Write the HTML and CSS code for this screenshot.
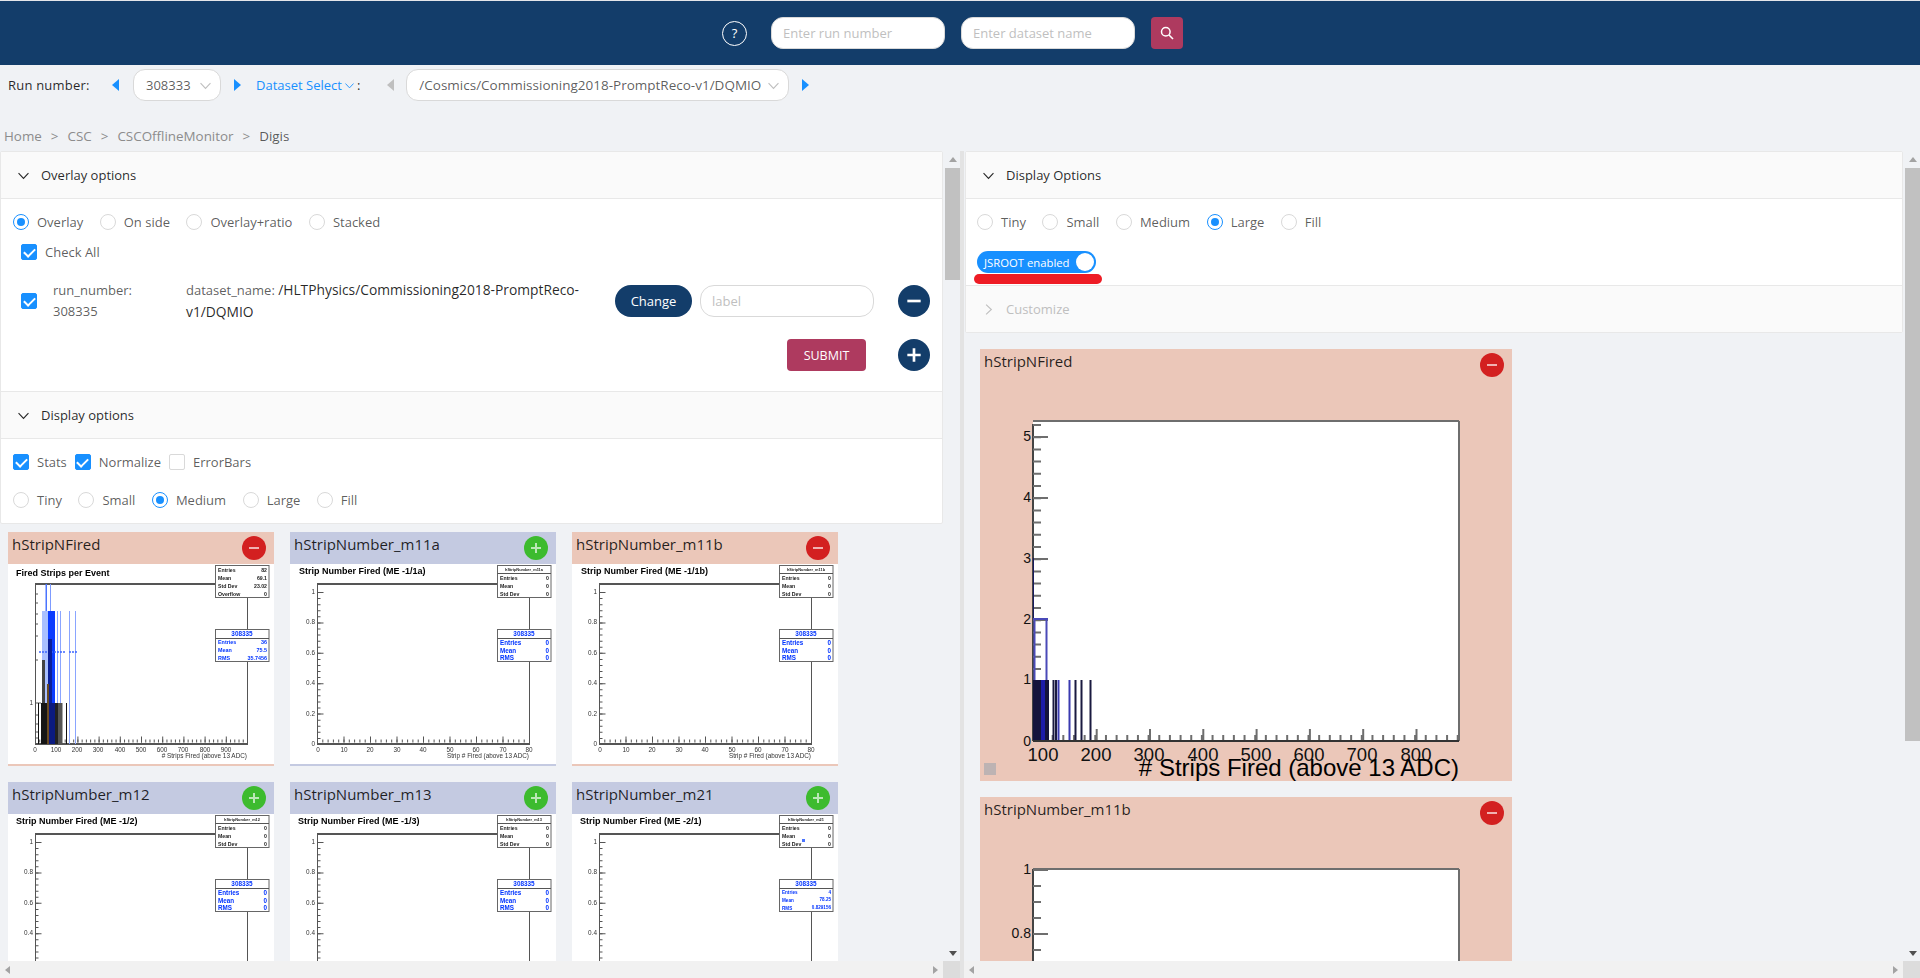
FILE: index.html
```html
<!DOCTYPE html>
<html lang="en">
<head>
    <meta charset="UTF-8">
    <meta name="viewport" content="width=device-width, initial-scale=1.0">
    <title>DQM GUI</title>
    <link rel="stylesheet" href="styles.css">
</head>
<body>
    <!-- shared icons and plot lines -->
    <svg class="defs" aria-hidden="true">
        <symbol id="chev-down" viewBox="0 0 10 10"><path d="M0.5 2.8 5 7.6 9.5 2.8" fill="none" stroke="currentColor" stroke-width="1"/></symbol>
        <symbol id="chev-right" viewBox="0 0 10 10"><path d="M2.8 0.5 7.6 5 2.8 9.5" fill="none" stroke="currentColor" stroke-width="1"/></symbol>
        <symbol id="minus" viewBox="0 0 24 24"><path d="M7 12H17" stroke="currentColor" stroke-width="2" fill="none"/></symbol>
        <symbol id="plus" viewBox="0 0 24 24"><path d="M7 12H17M12 7V17" stroke="currentColor" stroke-width="2" fill="none"/></symbol>

        <symbol id="frame" viewBox="0 0 266 200">
            <rect width="266" height="200" fill="#fff"/>
            <path d="M27.5 180V20" class="ax-thin"/>
            <path d="M239.5 20V180" class="ax-thin"/>
            <path d="M27 20H240" class="ax-thick"/>
            <path d="M27 180H240" class="ax-thick"/>
        </symbol>

        <symbol id="run-box" viewBox="0 0 266 200">
            <rect x="207.5" y="65.5" width="53.5" height="32" class="box"/>
            <path d="M207.5 74.5H261" class="ax-thin"/>
        </symbol>

        <symbol id="strip-axes" viewBox="0 0 266 200">
            <use href="#frame" width="266" height="200"/>
            <path d="M29 28V180" class="tick-y-minor"/>
            <path d="M30.5 28V180" class="tick-y-major"/>
            <line x1="27" y1="177" x2="240" y2="177" class="tick-x-minor"/>
            <line x1="27" y1="175.5" x2="240" y2="175.5" class="tick-x-major"/>
            <rect x="207.5" y="1.5" width="53.5" height="32" class="box"/>
            <path d="M207.5 9.5H261" class="ax-thin"/>
            <use href="#run-box" width="266" height="200"/>
        </symbol>

        <symbol id="big-axes" viewBox="0 0 532 400">
            <rect x="53" y="40" width="426" height="320" fill="#fff"/>
            <line x1="53" y1="43" x2="53" y2="360" class="big-y-line"/>
            <line x1="57" y1="43" x2="57" y2="360" class="big-y-minor"/>
            <line x1="60.5" y1="55" x2="60.5" y2="360" class="big-y-major"/>
        </symbol>
    </svg>

    <header class="topbar">
        <span class="help">?</span>
        <input class="top-input" type="text" placeholder="Enter run number">
        <input class="top-input" type="text" placeholder="Enter dataset name">
        <button class="search-btn" aria-label="search">
            <svg width="14" height="14" viewBox="0 0 14 14"><circle cx="5.8" cy="5.8" r="4.3" fill="none" stroke="#fff" stroke-width="1.5"/><path d="M9 9 13 13" stroke="#fff" stroke-width="1.6"/></svg>
        </button>
    </header>

    <div class="select-row">
        <span class="run-label">Run number:</span>
        <span class="caret caret-left first"></span>
        <div class="fake-select run-select">308333<svg class="sel-chev"><use href="#chev-down"/></svg></div>
        <span class="caret caret-right"></span>
        <a class="dataset-link">Dataset Select<svg class="link-chev"><use href="#chev-down"/></svg></a><span class="colon">:</span>
        <span class="caret caret-left off"></span>
        <div class="fake-select dataset-select">/Cosmics/Commissioning2018-PromptReco-v1/DQMIO<svg class="sel-chev"><use href="#chev-down"/></svg></div>
        <span class="caret caret-right"></span>
    </div>

    <nav class="crumbs">
        <span>Home</span><i>&gt;</i><span>CSC</span><i>&gt;</i><span>CSCOfflineMonitor</span><i>&gt;</i><span class="last">Digis</span>
    </nav>

    <main class="panes">
        <section class="pane">
            <div class="scroll">
                <div class="panel">
                    <div class="panel-head"><svg class="head-chev"><use href="#chev-down"/></svg>Overlay options</div>
                    <div class="panel-body overlay-body">
                        <div class="choice-row">
                            <label class="choice"><span class="radio on"></span>Overlay</label>
                            <label class="choice"><span class="radio"></span>On side</label>
                            <label class="choice"><span class="radio"></span>Overlay+ratio</label>
                            <label class="choice"><span class="radio"></span>Stacked</label>
                        </div>
                        <label class="choice check-all"><span class="check on"></span>Check All</label>
                        <div class="overlay-row">
                            <span class="check on"></span>
                            <div class="run-col">run_number:<br>308335</div>
                            <div class="ds-col">dataset_name: <b>/HLTPhysics/Commissioning2018-PromptReco-v1/DQMIO</b></div>
                            <button class="change-btn">Change</button>
                            <input class="label-input" type="text" placeholder="label">
                            <button class="circle-btn"><svg width="32" height="32"><use href="#minus"/></svg></button>
                        </div>
                        <div class="submit-row">
                            <button class="submit-btn">SUBMIT</button>
                            <button class="circle-btn"><svg width="32" height="32"><use href="#plus"/></svg></button>
                        </div>
                    </div>
                    <div class="panel-head"><svg class="head-chev"><use href="#chev-down"/></svg>Display options</div>
                    <div class="panel-body display-body">
                        <div class="check-row">
                            <label class="choice"><span class="check on"></span>Stats</label>
                            <label class="choice"><span class="check on"></span>Normalize</label>
                            <label class="choice"><span class="check"></span>ErrorBars</label>
                        </div>
                        <div class="choice-row size-row">
                            <label class="choice"><span class="radio"></span>Tiny</label>
                            <label class="choice"><span class="radio"></span>Small</label>
                            <label class="choice"><span class="radio on"></span>Medium</label>
                            <label class="choice"><span class="radio"></span>Large</label>
                            <label class="choice"><span class="radio"></span>Fill</label>
                        </div>
                    </div>
                </div>

                <div class="plot-grid">
                    <div class="card salmon">
                        <div class="card-head"><span>hStripNFired</span><button class="toggle red"><svg width="24" height="24"><use href="#minus"/></svg></button></div>
                        <svg class="plot-small" viewBox="0 0 266 200">
                            <use href="#frame" width="266" height="200"/>
                            <path d="M27 30H30M27 39H30M27 50H30M27 60H30M27 72H30M27 96H30M27 139H33M27 151H30M27 160H30M27 168H30M27 174H30" class="ax-thin"/>
                            <line x1="27" y1="177" x2="240" y2="177" class="tick-x-minor wide"/>
                            <line x1="27" y1="175.5" x2="240" y2="175.5" class="tick-x-major wide"/>
                            <rect x="34" y="47" width="6" height="133" fill="#a9c0ff"/>
                            <rect x="40" y="47" width="7" height="133" fill="#0b3cff"/>
                            <rect x="37.5" y="20" width="1.5" height="27" fill="#4a74ff"/>
                            <rect x="42" y="20" width="1" height="27" fill="#7d9bff"/>
                            <path d="M49.5 47V180M52.5 47V180M61.5 47V180M67.5 47V180" stroke="#8aa5ff" stroke-width="1" fill="none"/>
                            <path d="M31 88H57M61 88H69" stroke="#3d66ff" stroke-width="1.4" stroke-dasharray="2 1" fill="none"/>
                            <rect x="34" y="96" width="3" height="43" fill="#444"/>
                            <rect x="40" y="75" width="4" height="64" fill="#0a1f99"/>
                            <path d="M30.5 139V180M58.5 139V180" stroke="#111" stroke-width="1" fill="none"/>
                            <rect x="33" y="139" width="6" height="41" fill="#151515"/>
                            <rect x="39" y="120" width="2" height="60" fill="#6a4a20"/>
                            <rect x="41" y="139" width="6" height="41" fill="#0b1a80"/>
                            <rect x="47" y="139" width="3" height="41" fill="#222"/>
                            <rect x="50" y="139" width="4.5" height="41" fill="#555"/>
                            <text x="25" y="141" class="tick-lbl end">1</text>
                            <text x="8" y="12" class="plot-title">Fired Strips per Event</text>
                            <text x="27" y="188" class="tick-lbl mid">0</text>
                            <text x="48" y="188" class="tick-lbl mid">100</text>
                            <text x="69" y="188" class="tick-lbl mid">200</text>
                            <text x="90" y="188" class="tick-lbl mid">300</text>
                            <text x="112" y="188" class="tick-lbl mid">400</text>
                            <text x="133" y="188" class="tick-lbl mid">500</text>
                            <text x="154" y="188" class="tick-lbl mid">600</text>
                            <text x="175" y="188" class="tick-lbl mid">700</text>
                            <text x="197" y="188" class="tick-lbl mid">800</text>
                            <text x="218" y="188" class="tick-lbl mid">900</text>
                            <text x="239" y="193.5" class="tick-lbl end"># Strips Fired (above 13 ADC)</text>
                            <rect x="207.5" y="1.5" width="53.5" height="32" class="box"/>
                            <text x="210" y="7.5" class="st">Entries</text><text x="259" y="7.5" class="st end">82</text>
                            <text x="210" y="15.5" class="st">Mean</text><text x="259" y="15.5" class="st end">69.1</text>
                            <text x="210" y="23.5" class="st">Std Dev</text><text x="259" y="23.5" class="st end">23.02</text>
                            <text x="210" y="31.5" class="st">Overflow</text><text x="259" y="31.5" class="st end">0</text>
                            <use href="#run-box" width="266" height="200"/>
                            <text x="234" y="72.3" class="run-id">308335</text>
                            <text x="210" y="80" class="st-blue small">Entries</text><text x="259" y="80" class="st-blue small end">36</text>
                            <text x="210" y="88" class="st-blue small">Mean</text><text x="259" y="88" class="st-blue small end">75.5</text>
                            <text x="210" y="96" class="st-blue small">RMS</text><text x="259" y="96" class="st-blue small end">35.7456</text>
                        </svg>
                    </div>

                    <div class="card blue">
                        <div class="card-head"><span>hStripNumber_m11a</span><button class="toggle green"><svg width="24" height="24"><use href="#plus"/></svg></button></div>
                        <svg class="plot-small" viewBox="0 0 266 200">
                            <use href="#strip-axes" width="266" height="200"/>
                            <text x="9" y="9.5" class="plot-title">Strip Number Fired (ME -1/1a)</text>
                            <text x="25" y="30" class="tick-lbl end">1</text>
                            <text x="25" y="60" class="tick-lbl end">0.8</text>
                            <text x="25" y="91" class="tick-lbl end">0.6</text>
                            <text x="25" y="121" class="tick-lbl end">0.4</text>
                            <text x="25" y="152" class="tick-lbl end">0.2</text>
                            <text x="25" y="182" class="tick-lbl end">0</text>
                            <text x="28" y="188" class="tick-lbl mid">0</text>
                            <text x="54" y="188" class="tick-lbl mid">10</text>
                            <text x="80" y="188" class="tick-lbl mid">20</text>
                            <text x="107" y="188" class="tick-lbl mid">30</text>
                            <text x="133" y="188" class="tick-lbl mid">40</text>
                            <text x="160" y="188" class="tick-lbl mid">50</text>
                            <text x="186" y="188" class="tick-lbl mid">60</text>
                            <text x="213" y="188" class="tick-lbl mid">70</text>
                            <text x="239" y="188" class="tick-lbl mid">80</text>
                            <text x="239" y="193.5" class="tick-lbl end">Strip # Fired (above 13 ADC)</text>
                            <text x="234" y="7" class="st-name">hStripNumber_m11a</text>
                            <text x="210" y="16" class="st">Entries</text><text x="259" y="16" class="st end">0</text>
                            <text x="210" y="24" class="st">Mean</text><text x="259" y="24" class="st end">0</text>
                            <text x="210" y="32" class="st">Std Dev</text><text x="259" y="32" class="st end">0</text>
                            <text x="234" y="72.3" class="run-id">308335</text>
                            <text x="210" y="80.5" class="st-blue">Entries</text><text x="259" y="80.5" class="st-blue end">0</text>
                            <text x="210" y="88.5" class="st-blue">Mean</text><text x="259" y="88.5" class="st-blue end">0</text>
                            <text x="210" y="96.3" class="st-blue">RMS</text><text x="259" y="96.3" class="st-blue end">0</text>
                        </svg>
                    </div>

                    <div class="card salmon">
                        <div class="card-head"><span>hStripNumber_m11b</span><button class="toggle red"><svg width="24" height="24"><use href="#minus"/></svg></button></div>
                        <svg class="plot-small" viewBox="0 0 266 200">
                            <use href="#strip-axes" width="266" height="200"/>
                            <text x="9" y="9.5" class="plot-title">Strip Number Fired (ME -1/1b)</text>
                            <text x="25" y="30" class="tick-lbl end">1</text>
                            <text x="25" y="60" class="tick-lbl end">0.8</text>
                            <text x="25" y="91" class="tick-lbl end">0.6</text>
                            <text x="25" y="121" class="tick-lbl end">0.4</text>
                            <text x="25" y="152" class="tick-lbl end">0.2</text>
                            <text x="25" y="182" class="tick-lbl end">0</text>
                            <text x="28" y="188" class="tick-lbl mid">0</text>
                            <text x="54" y="188" class="tick-lbl mid">10</text>
                            <text x="80" y="188" class="tick-lbl mid">20</text>
                            <text x="107" y="188" class="tick-lbl mid">30</text>
                            <text x="133" y="188" class="tick-lbl mid">40</text>
                            <text x="160" y="188" class="tick-lbl mid">50</text>
                            <text x="186" y="188" class="tick-lbl mid">60</text>
                            <text x="213" y="188" class="tick-lbl mid">70</text>
                            <text x="239" y="188" class="tick-lbl mid">80</text>
                            <text x="239" y="193.5" class="tick-lbl end">Strip # Fired (above 13 ADC)</text>
                            <text x="234" y="7" class="st-name">hStripNumber_m11b</text>
                            <text x="210" y="16" class="st">Entries</text><text x="259" y="16" class="st end">0</text>
                            <text x="210" y="24" class="st">Mean</text><text x="259" y="24" class="st end">0</text>
                            <text x="210" y="32" class="st">Std Dev</text><text x="259" y="32" class="st end">0</text>
                            <text x="234" y="72.3" class="run-id">308335</text>
                            <text x="210" y="80.5" class="st-blue">Entries</text><text x="259" y="80.5" class="st-blue end">0</text>
                            <text x="210" y="88.5" class="st-blue">Mean</text><text x="259" y="88.5" class="st-blue end">0</text>
                            <text x="210" y="96.3" class="st-blue">RMS</text><text x="259" y="96.3" class="st-blue end">0</text>
                        </svg>
                    </div>

                    <div class="card blue">
                        <div class="card-head"><span>hStripNumber_m12</span><button class="toggle green"><svg width="24" height="24"><use href="#plus"/></svg></button></div>
                        <svg class="plot-small" viewBox="0 0 266 200">
                            <use href="#strip-axes" width="266" height="200"/>
                            <text x="8" y="9.5" class="plot-title">Strip Number Fired (ME -1/2)</text>
                            <text x="25" y="30" class="tick-lbl end">1</text>
                            <text x="25" y="60" class="tick-lbl end">0.8</text>
                            <text x="25" y="91" class="tick-lbl end">0.6</text>
                            <text x="25" y="121" class="tick-lbl end">0.4</text>
                            <text x="234" y="7" class="st-name">hStripNumber_m12</text>
                            <text x="210" y="16" class="st">Entries</text><text x="259" y="16" class="st end">0</text>
                            <text x="210" y="24" class="st">Mean</text><text x="259" y="24" class="st end">0</text>
                            <text x="210" y="32" class="st">Std Dev</text><text x="259" y="32" class="st end">0</text>
                            <text x="234" y="72.3" class="run-id">308335</text>
                            <text x="210" y="80.5" class="st-blue">Entries</text><text x="259" y="80.5" class="st-blue end">0</text>
                            <text x="210" y="88.5" class="st-blue">Mean</text><text x="259" y="88.5" class="st-blue end">0</text>
                            <text x="210" y="96.3" class="st-blue">RMS</text><text x="259" y="96.3" class="st-blue end">0</text>
                        </svg>
                    </div>

                    <div class="card blue">
                        <div class="card-head"><span>hStripNumber_m13</span><button class="toggle green"><svg width="24" height="24"><use href="#plus"/></svg></button></div>
                        <svg class="plot-small" viewBox="0 0 266 200">
                            <use href="#strip-axes" width="266" height="200"/>
                            <text x="8" y="9.5" class="plot-title">Strip Number Fired (ME -1/3)</text>
                            <text x="25" y="30" class="tick-lbl end">1</text>
                            <text x="25" y="60" class="tick-lbl end">0.8</text>
                            <text x="25" y="91" class="tick-lbl end">0.6</text>
                            <text x="25" y="121" class="tick-lbl end">0.4</text>
                            <text x="234" y="7" class="st-name">hStripNumber_m13</text>
                            <text x="210" y="16" class="st">Entries</text><text x="259" y="16" class="st end">0</text>
                            <text x="210" y="24" class="st">Mean</text><text x="259" y="24" class="st end">0</text>
                            <text x="210" y="32" class="st">Std Dev</text><text x="259" y="32" class="st end">0</text>
                            <text x="234" y="72.3" class="run-id">308335</text>
                            <text x="210" y="80.5" class="st-blue">Entries</text><text x="259" y="80.5" class="st-blue end">0</text>
                            <text x="210" y="88.5" class="st-blue">Mean</text><text x="259" y="88.5" class="st-blue end">0</text>
                            <text x="210" y="96.3" class="st-blue">RMS</text><text x="259" y="96.3" class="st-blue end">0</text>
                        </svg>
                    </div>

                    <div class="card blue">
                        <div class="card-head"><span>hStripNumber_m21</span><button class="toggle green"><svg width="24" height="24"><use href="#plus"/></svg></button></div>
                        <svg class="plot-small" viewBox="0 0 266 200">
                            <use href="#strip-axes" width="266" height="200"/>
                            <text x="8" y="9.5" class="plot-title">Strip Number Fired (ME -2/1)</text>
                            <text x="25" y="30" class="tick-lbl end">1</text>
                            <text x="25" y="60" class="tick-lbl end">0.8</text>
                            <text x="25" y="91" class="tick-lbl end">0.6</text>
                            <text x="25" y="121" class="tick-lbl end">0.4</text>
                            <text x="234" y="7" class="st-name">hStripNumber_m21</text>
                            <text x="210" y="16" class="st">Entries</text><text x="259" y="16" class="st end">0</text>
                            <text x="210" y="24" class="st">Mean</text><text x="259" y="24" class="st end">0</text>
                            <text x="210" y="32" class="st">Std Dev</text><text x="259" y="32" class="st end">0</text>
                            <rect x="230" y="25" width="3" height="3" fill="#4a74ff"/>
                            <text x="234" y="72.3" class="run-id">308335</text>
                            <text x="210" y="80" class="st-blue tiny">Entries</text><text x="259" y="80" class="st-blue tiny end">4</text>
                            <text x="210" y="88" class="st-blue tiny">Mean</text><text x="259" y="87" class="st-blue tiny end">78.25</text>
                            <text x="210" y="96" class="st-blue tiny">RMS</text><text x="259" y="95" class="st-blue tiny end">0.829156</text>
                        </svg>
                    </div>
                </div>
            </div>
            <div class="vbar"><span class="arrow up dim"></span><span class="thumb left-thumb"></span><span class="arrow down"></span></div>
            <div class="hbar"><span class="arrow to-left"></span><span class="arrow to-right"></span></div>
            <div class="corner"></div>
        </section>

        <section class="pane right-pane">
            <div class="scroll">
                <div class="panel">
                    <div class="panel-head"><svg class="head-chev"><use href="#chev-down"/></svg>Display Options</div>
                    <div class="panel-body jsroot-body">
                        <div class="choice-row">
                            <label class="choice"><span class="radio"></span>Tiny</label>
                            <label class="choice"><span class="radio"></span>Small</label>
                            <label class="choice"><span class="radio"></span>Medium</label>
                            <label class="choice"><span class="radio on"></span>Large</label>
                            <label class="choice"><span class="radio"></span>Fill</label>
                        </div>
                        <div class="switch">JSROOT enabled<span class="knob"></span></div>
                        <div class="red-mark"></div>
                    </div>
                    <div class="panel-head muted"><svg class="head-chev"><use href="#chev-right"/></svg>Customize</div>
                </div>

                <div class="big-stack">
                    <div class="card salmon big">
                        <div class="card-head"><span>hStripNFired</span><button class="toggle red"><svg width="24" height="24"><use href="#minus"/></svg></button></div>
                        <svg class="plot-big" viewBox="0 0 532 400">
                            <use href="#big-axes" width="532" height="400"/>
                            <line x1="61" y1="357" x2="479" y2="357" class="big-x-minor"/>
                            <line x1="62.4" y1="354" x2="479" y2="354" class="big-x-major"/>
                            <rect x="53" y="299" width="16" height="61" fill="#14143c"/>
                            <rect x="61" y="299" width="4" height="61" fill="#1c1ca8"/>
                            <path d="M53.5 177V238" fill="none" stroke="#1a1a60" stroke-width="1"/>
                            <path d="M54.5 238V299M53 238H68M66.5 238V299" fill="none" stroke="#4a4ab8" stroke-width="2"/>
                            <path d="M73.5 299V360M76 299V360M95.5 299V360M101.5 299V360M110.5 299V360" stroke="#1a1a40" stroke-width="2" fill="none"/>
                            <path d="M78.5 299V360M89.5 299V360" stroke="#3a3ab0" stroke-width="2" fill="none"/>
                            <path d="M53 40H479M479 40V360" class="big-frame"/>
                            <path d="M53 360H479" class="big-bottom"/>
                            <text x="51" y="60" class="big-y">5</text>
                            <text x="51" y="121" class="big-y">4</text>
                            <text x="51" y="182" class="big-y">3</text>
                            <text x="51" y="243" class="big-y">2</text>
                            <text x="51" y="303" class="big-y">1</text>
                            <text x="51" y="365" class="big-y">0</text>
                            <text x="63" y="380" class="big-x">100</text>
                            <text x="116" y="380" class="big-x">200</text>
                            <text x="169" y="380" class="big-x">300</text>
                            <text x="223" y="380" class="big-x">400</text>
                            <text x="276" y="380" class="big-x">500</text>
                            <text x="329" y="380" class="big-x">600</text>
                            <text x="382" y="380" class="big-x">700</text>
                            <text x="436" y="380" class="big-x">800</text>
                            <text x="479" y="395" class="big-title"># Strips Fired (above 13 ADC)</text>
                            <rect x="4" y="382" width="12" height="12" fill="#bdb3b3"/>
                        </svg>
                    </div>
                    <div class="card salmon big">
                        <div class="card-head"><span>hStripNumber_m11b</span><button class="toggle red"><svg width="24" height="24"><use href="#minus"/></svg></button></div>
                        <svg class="plot-big" viewBox="0 0 532 400">
                            <rect x="53" y="40" width="426" height="320" fill="#fff"/>
                            <line x1="53" y1="40" x2="53" y2="360" class="big-y-line"/>
                            <line x1="57" y1="40" x2="57" y2="360" class="big-y-minor wide"/>
                            <line x1="60.5" y1="40" x2="60.5" y2="360" class="big-y-major wide"/>
                            <path d="M53 40H479M479 40V360" class="big-frame"/>
                            <text x="51" y="45" class="big-y">1</text>
                            <text x="51" y="109" class="big-y">0.8</text>
                        </svg>
                    </div>
                </div>
            </div>
            <div class="vbar"><span class="arrow up dim"></span><span class="thumb right-thumb"></span><span class="arrow down"></span></div>
            <div class="hbar"><span class="arrow to-left"></span><span class="arrow to-right"></span></div>
            <div class="corner"></div>
        </section>
    </main>
</body>
</html>
```

FILE: styles.css
```css
* {
    box-sizing: border-box;
}

body {
    margin: 0;
    height: 978px;
    overflow: hidden;
    background-color: #f0f2f5;
    font-family: "Open Sans", "Liberation Sans", sans-serif;
    font-size: 13px;
    color: rgba(0, 0, 0, 0.65);
}

input, button {
    font-family: inherit;
    font-size: 13px;
}

input::placeholder {
    color: #bfbfbf;
}

.defs {
    position: absolute;
    width: 0;
    height: 0;
}

/* top bar */
.topbar {
    height: 65px;
    border-top: 1px solid #e4e6ea;
    background-color: #133d6a;
    display: flex;
    align-items: center;
    padding-left: 722px;
}

.help {
    width: 25px;
    height: 25px;
    border: 1px solid #fff;
    border-radius: 50%;
    color: #fff;
    font-size: 13px;
    display: flex;
    align-items: center;
    justify-content: center;
    margin-right: 24px;
}

.top-input {
    width: 174px;
    height: 32px;
    border: 1px solid #d9d9d9;
    border-radius: 12px;
    padding: 0 11px;
    margin-right: 16px;
    background-color: #fff;
}

.search-btn {
    width: 32px;
    height: 32px;
    border: none;
    border-radius: 4px;
    background-color: #ae3a5f;
    display: flex;
    align-items: center;
    justify-content: center;
    padding: 0;
}

/* run and dataset selection */
.select-row {
    height: 40px;
    padding: 4px 0 4px 8px;
    display: flex;
    align-items: center;
    color: rgba(0, 0, 0, 0.85);
}

.run-label {
    width: 82px;
    letter-spacing: 0.2px;
    white-space: nowrap;
}

.caret {
    width: 0;
    height: 0;
    border-top: 6px solid transparent;
    border-bottom: 6px solid transparent;
}

.caret-left {
    border-right: 7px solid #1890ff;
}

.caret-left.first {
    margin-left: 22px;
    margin-right: 14px;
}

.caret-left.off {
    border-right-color: #bfbfbf;
    margin-left: 27px;
    margin-right: 12px;
}

.caret-right {
    border-left: 7px solid #1890ff;
    margin-left: 13px;
}

.fake-select {
    height: 32px;
    border: 1px solid #d9d9d9;
    border-radius: 12px;
    background-color: #fff;
    display: flex;
    align-items: center;
    justify-content: space-between;
    padding: 0 9px 0 12px;
    color: rgba(0, 0, 0, 0.65);
}

.run-select {
    width: 88px;
}

.dataset-select {
    width: 383px;
    font-size: 13.5px;
    white-space: nowrap;
}

.sel-chev {
    width: 11px;
    height: 11px;
    color: #bfbfbf;
    flex: none;
}

.dataset-link {
    color: #1890ff;
    margin-left: 15px;
    display: flex;
    align-items: center;
}

.link-chev {
    width: 9px;
    height: 9px;
    margin-left: 3px;
}

.colon {
    margin-left: 3px;
}

.crumbs {
    height: 46px;
    padding: 20px 0 0 4px;
    line-height: 22px;
    font-size: 13.4px;
    color: #8c8c8c;
    display: flex;
}

.crumbs i {
    font-style: normal;
    margin: 0 9px;
}

.crumbs .last {
    color: rgba(0, 0, 0, 0.65);
}

/* two side by side panes */
.panes {
    display: flex;
    height: 827px;
}

.pane {
    width: 960px;
    display: grid;
    grid-template-columns: 943px 17px;
    grid-template-rows: 810px 17px;
}

.right-pane {
    border-left: 4px solid #e3e3e3;
    grid-template-columns: 939px 17px;
}

.scroll {
    overflow: hidden;
}

.right-pane .scroll {
    padding-left: 1px;
}

.panel {
    background-color: #fff;
    border: 1px solid #e8e8e8;
    border-radius: 2px;
}

.panel-head {
    height: 47px;
    background-color: #fafafa;
    border-bottom: 1px solid #e8e8e8;
    display: flex;
    align-items: center;
    padding-left: 17px;
    color: rgba(0, 0, 0, 0.85);
}

.panel-head.muted {
    color: #bfbfbf;
    border-bottom: none;
    height: 46px;
}

.head-chev {
    width: 11px;
    height: 11px;
    margin-right: 12px;
}

.panel-body {
    padding-left: 12px;
    padding-right: 12px;
    border-bottom: 1px solid #e8e8e8;
}

.choice-row {
    display: flex;
    height: 22px;
    gap: 16.5px;
}

.choice {
    display: flex;
    align-items: center;
    gap: 8px;
    line-height: 22px;
}

.radio {
    width: 16px;
    height: 16px;
    border: 1px solid #d9d9d9;
    border-radius: 50%;
    background-color: #fff;
    display: flex;
    align-items: center;
    justify-content: center;
}

.radio.on {
    border-color: #1890ff;
}

.radio.on::after {
    content: "";
    width: 8px;
    height: 8px;
    border-radius: 50%;
    background-color: #1890ff;
}

.check {
    width: 16px;
    height: 16px;
    border: 1px solid #d9d9d9;
    border-radius: 2px;
    background-color: #fff;
    display: flex;
    align-items: center;
    justify-content: center;
}

.check.on {
    background-color: #1890ff;
    border-color: #1890ff;
}

.check.on::after {
    content: "";
    width: 5px;
    height: 9px;
    border: solid #fff;
    border-width: 0 2px 2px 0;
    transform: rotate(45deg);
    margin-top: -2px;
}

.overlay-body {
    padding-top: 12px;
    padding-bottom: 20px;
}

.check-all {
    margin-top: 8px;
    margin-left: 8px;
}

.overlay-row {
    margin-top: 22px;
    height: 32px;
    display: flex;
    align-items: center;
    padding-left: 8px;
}

.run-col {
    width: 133px;
    margin-left: 16px;
    line-height: 21px;
}

.ds-col {
    width: 429px;
    padding-right: 30px;
    line-height: 21px;
}

.ds-col b {
    font-weight: 400;
    font-size: 13.8px;
    color: rgba(0, 0, 0, 0.85);
}

.change-btn {
    width: 77px;
    height: 32px;
    border: none;
    border-radius: 16px;
    background-color: #133d6a;
    color: #fff;
    padding: 0;
}

.label-input {
    width: 174px;
    height: 32px;
    margin-left: 8px;
    border: 1px solid #d9d9d9;
    border-radius: 14px;
    padding: 0 11px;
}

.circle-btn {
    width: 32px;
    height: 32px;
    margin-left: 24px;
    border: none;
    border-radius: 50%;
    background-color: #133d6a;
    color: #fff;
    padding: 0;
    display: flex;
}

.submit-row {
    margin-top: 22px;
    display: flex;
    justify-content: flex-end;
    width: 917px;
}

.submit-btn {
    width: 79px;
    height: 32px;
    border: none;
    border-radius: 4px;
    background-color: #ae3a5f;
    color: #fff;
    padding: 0;
    font-size: 12.5px;
    margin-right: 8px;
}

.display-body {
    padding-top: 12px;
    padding-bottom: 12px;
    border-bottom: none;
}

.check-row {
    display: flex;
    gap: 8px;
    height: 22px;
}

.size-row {
    margin-top: 16px;
}

.jsroot-body {
    padding-top: 12px;
    padding-left: 11px;
}

.switch {
    width: 119px;
    height: 22px;
    margin-top: 18px;
    border-radius: 11px;
    background-color: #1890ff;
    color: #fff;
    font-size: 11.3px;
    display: flex;
    align-items: center;
    justify-content: space-between;
    padding: 0 2px 0 7px;
}

.knob {
    width: 18px;
    height: 18px;
    border-radius: 50%;
    background-color: #fff;
}

.red-mark {
    width: 128px;
    height: 10px;
    margin: 1px 0 1px -3px;
    border-radius: 5px;
    background-color: #ee1c25;
}

/* plot cards */
.plot-grid {
    display: grid;
    grid-template-columns: repeat(3, 266px);
    gap: 16px;
    padding: 8px;
}

.card {
    background-color: #ebc7b9;
}

.card.blue {
    background-color: #c4cae1;
}

.card-head {
    height: 32px;
    display: flex;
    justify-content: space-between;
    padding: 4px 8px 0 4px;
    font-size: 15px;
    line-height: 16px;
    color: rgba(0, 0, 0, 0.85);
}

.toggle {
    width: 24px;
    height: 24px;
    border: none;
    border-radius: 50%;
    padding: 0;
    display: flex;
    color: rgba(255, 255, 255, 0.65);
}

.toggle.red {
    background-color: #d32020;
}

.toggle.green {
    background-color: #3dbb2e;
}

.plot-small {
    display: block;
    width: 266px;
    height: 202px;
    padding-bottom: 2px;
    filter: blur(0.2px);
}

.plot-title {
    font: bold 9px "Liberation Sans", sans-serif;
    fill: #000;
}

.tick-lbl {
    font: 6.4px "Liberation Sans", sans-serif;
    fill: #333;
}

.st {
    font: bold 5.2px "Liberation Sans", sans-serif;
    fill: #222;
}

.st-name {
    font: bold 3.9px "Liberation Sans", sans-serif;
    fill: #222;
    text-anchor: middle;
}

.st-blue {
    font: bold 6.3px "Liberation Sans", sans-serif;
    fill: #0033ff;
}

.st-blue.small {
    font-size: 5.4px;
}

.st-blue.tiny {
    font-size: 4.6px;
}

.run-id {
    font: bold 6.4px "Liberation Sans", sans-serif;
    fill: #0033ff;
    text-anchor: middle;
}

.end {
    text-anchor: end;
}

.mid {
    text-anchor: middle;
}

.box {
    fill: #fff;
    stroke: #666;
    stroke-width: 1;
}

.ax-thin {
    fill: none;
    stroke: #555;
    stroke-width: 1;
}

.ax-thick {
    fill: none;
    stroke: #555;
    stroke-width: 2;
}

.tick-x-minor {
    stroke: #555;
    stroke-width: 3;
    stroke-dasharray: 1 4.3;
}

.tick-x-minor.wide {
    stroke-dasharray: 1 3.24;
}

.tick-x-major {
    stroke: #555;
    stroke-width: 6;
    stroke-dasharray: 1 25.5;
}

.tick-x-major.wide {
    stroke-dasharray: 1 20.2;
}

.tick-y-minor {
    fill: none;
    stroke: #555;
    stroke-width: 3;
    stroke-dasharray: 1 5.08;
}

.tick-y-major {
    fill: none;
    stroke: #555;
    stroke-width: 6;
    stroke-dasharray: 1 29.4;
}

/* large plots */
.big-stack {
    display: flex;
    flex-direction: column;
    gap: 16px;
    padding: 16px 0 0 15px;
}

.card.big {
    width: 532px;
}

.plot-big {
    display: block;
    width: 532px;
    height: 400px;
}

.big-frame {
    fill: none;
    stroke: #6e6e6e;
    stroke-width: 2;
}

.big-bottom {
    fill: none;
    stroke: #333;
    stroke-width: 2;
}

.big-y-line {
    stroke: #444;
    stroke-width: 2;
}

.big-y-minor {
    stroke: #6e6e6e;
    stroke-width: 8;
    stroke-dasharray: 2 10.2;
}

.big-y-minor.wide {
    stroke-dasharray: 2 14;
}

.big-y-major {
    stroke: #6e6e6e;
    stroke-width: 15;
    stroke-dasharray: 2 59;
}

.big-y-major.wide {
    stroke-dasharray: 2 62;
}

.big-x-minor {
    stroke: #6e6e6e;
    stroke-width: 6;
    stroke-dasharray: 2 8.66;
}

.big-x-major {
    stroke: #6e6e6e;
    stroke-width: 12;
    stroke-dasharray: 2 51.3;
}

.big-y {
    font: 14px "Liberation Sans", sans-serif;
    fill: #111;
    text-anchor: end;
}

.big-x {
    font: 18.5px "Liberation Sans", sans-serif;
    fill: #111;
    text-anchor: middle;
}

.big-title {
    font: 24px "Liberation Sans", sans-serif;
    fill: #000;
    text-anchor: end;
}

/* drawn scrollbars */
.vbar {
    display: flex;
    flex-direction: column;
    align-items: center;
    padding-left: 2px;
}

.thumb {
    width: 15px;
    background-color: #c1c1c1;
}

.left-thumb {
    height: 112px;
}

.right-thumb {
    height: 573px;
}

.arrow {
    width: 0;
    height: 0;
    border: 4px solid transparent;
}

.arrow.up {
    border-bottom: 5px solid #505050;
    border-top-width: 0;
    margin: 6px 0 6px;
}

.arrow.dim {
    border-bottom-color: #a3a3a3;
}

.arrow.down {
    border-top: 5px solid #505050;
    border-bottom-width: 0;
    margin-top: auto;
    margin-bottom: 5px;
}

.hbar {
    background-color: #f1f1f1;
    display: flex;
    align-items: center;
    justify-content: space-between;
    padding: 0 5px;
}

.arrow.to-left {
    border-right: 5px solid #a3a3a3;
    border-left-width: 0;
}

.arrow.to-right {
    border-left: 5px solid #a3a3a3;
    border-right-width: 0;
}

.corner {
    background-color: #dcdcdc;
}
```
